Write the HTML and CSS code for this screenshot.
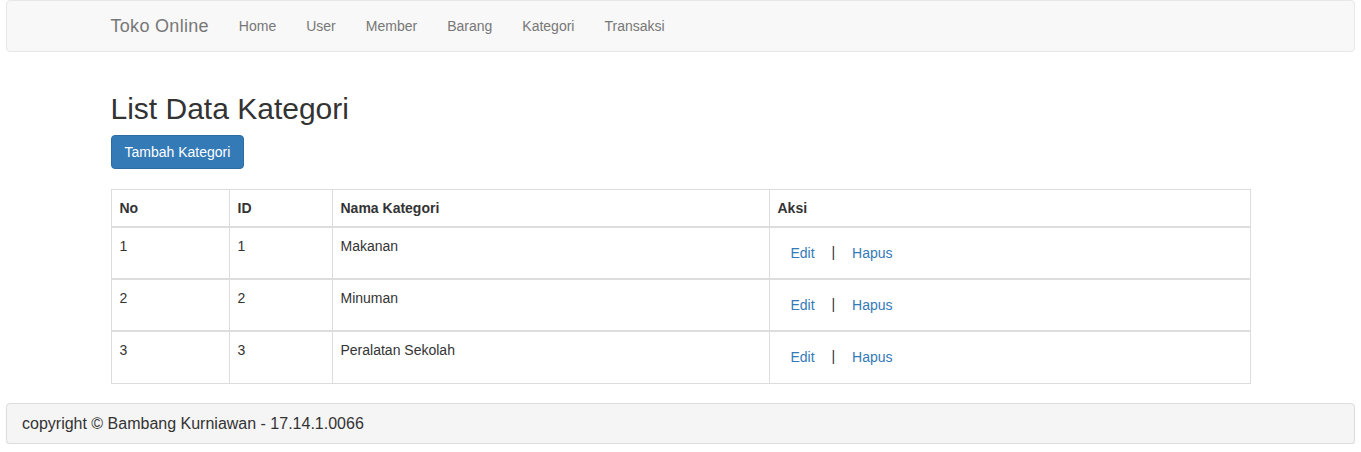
FILE: index.html
```html
<!DOCTYPE html>
<html lang="id">
<head>
<meta charset="utf-8">
<title>Toko Online</title>
<link rel="stylesheet" href="styles.css">
</head>
<body>
<div class="page">
  <nav class="navbar">
    <div class="container nav-inner">
      <a class="brand" href="#">Toko Online</a>
      <ul class="nav">
        <li><a href="#">Home</a></li>
        <li><a href="#">User</a></li>
        <li><a href="#">Member</a></li>
        <li><a href="#">Barang</a></li>
        <li><a href="#">Kategori</a></li>
        <li><a href="#">Transaksi</a></li>
      </ul>
    </div>
  </nav>

  <main class="container content">
    <h2 class="title">List Data Kategori</h2>
    <a class="btn btn-primary" href="#">Tambah Kategori</a>
    <table class="table">
      <thead>
        <tr><th class="c-no">No</th><th class="c-id">ID</th><th class="c-nama">Nama Kategori</th><th>Aksi</th></tr>
      </thead>
      <tbody>
        <tr><td>1</td><td>1</td><td>Makanan</td><td><a class="btn btn-link" href="#">Edit</a> | <a class="btn btn-link" href="#">Hapus</a></td></tr>
        <tr><td>2</td><td>2</td><td>Minuman</td><td><a class="btn btn-link" href="#">Edit</a> | <a class="btn btn-link" href="#">Hapus</a></td></tr>
        <tr><td>3</td><td>3</td><td>Peralatan Sekolah</td><td><a class="btn btn-link" href="#">Edit</a> | <a class="btn btn-link" href="#">Hapus</a></td></tr>
      </tbody>
    </table>
  </main>

  <footer class="footer">copyright © Bambang Kurniawan - 17.14.1.0066</footer>
</div>
</body>
</html>
```

FILE: styles.css
```css
* { box-sizing: border-box; }
html, body { margin: 0; padding: 0; }
body {
  font-family: "Liberation Sans", Arial, sans-serif;
  font-size: 14px;
  line-height: 1.42857;
  color: #333;
  background: #fff;
}
a { text-decoration: none; }
.page { padding: 0 6px; }
.container {
  width: 1170px;
  margin: 0 auto;
  padding: 0 15px;
}
.navbar {
  height: 52px;
  background: #f8f8f8;
  border: 1px solid #e7e7e7;
  border-radius: 4px;
  margin-bottom: 20px;
}
.nav-inner { display: flex; align-items: stretch; height: 50px; }
.brand {
  margin-left: -15px;
  padding: 15px;
  font-size: 18px;
  line-height: 20px;
  height: 50px;
  color: #777;
  letter-spacing: 0.3px;
}
.nav { display: flex; list-style: none; margin: 0; padding: 0; }
.nav a {
  display: block;
  padding: 15px;
  line-height: 20px;
  color: #777;
  font-size: 14px;
}
.content { padding-top: 20px; }
.title {
  font-size: 30px;
  font-weight: 500;
  line-height: 1.1;
  margin: 0 0 10px;
  color: #333;
}
.btn {
  display: inline-block;
  padding: 6px 12px;
  font-size: 14px;
  line-height: 20px;
  border: 1px solid transparent;
  border-radius: 4px;
  vertical-align: middle;
}
.btn-primary {
  color: #fff;
  background: #337ab7;
  border-color: #2e6da4;
  padding: 6px 13px;
}
.btn-link { color: #337ab7; }
.table {
  width: 100%;
  margin-top: 20px;
  margin-bottom: 19px;
  border-collapse: collapse;
  border: 1px solid #ddd;
}
.table th, .table td {
  border: 1px solid #ddd;
  padding: 8px;
  line-height: 20px;
  text-align: left;
  vertical-align: top;
}
.table th { border-bottom-width: 2px; font-weight: bold; vertical-align: bottom; }
.table tbody td { border-top-width: 2px; height: 52px; }
.c-no { width: 118px; }
.c-id { width: 103px; }
.c-nama { width: 437px; }
.footer {
  background: #f5f5f5;
  border: 1px solid #ddd;
  border-radius: 4px;
  box-shadow: 0 1px 1px rgba(0,0,0,.08);
  padding: 10px 15px;
  font-size: 16px;
  line-height: 19px;
  color: #333;
}
```
